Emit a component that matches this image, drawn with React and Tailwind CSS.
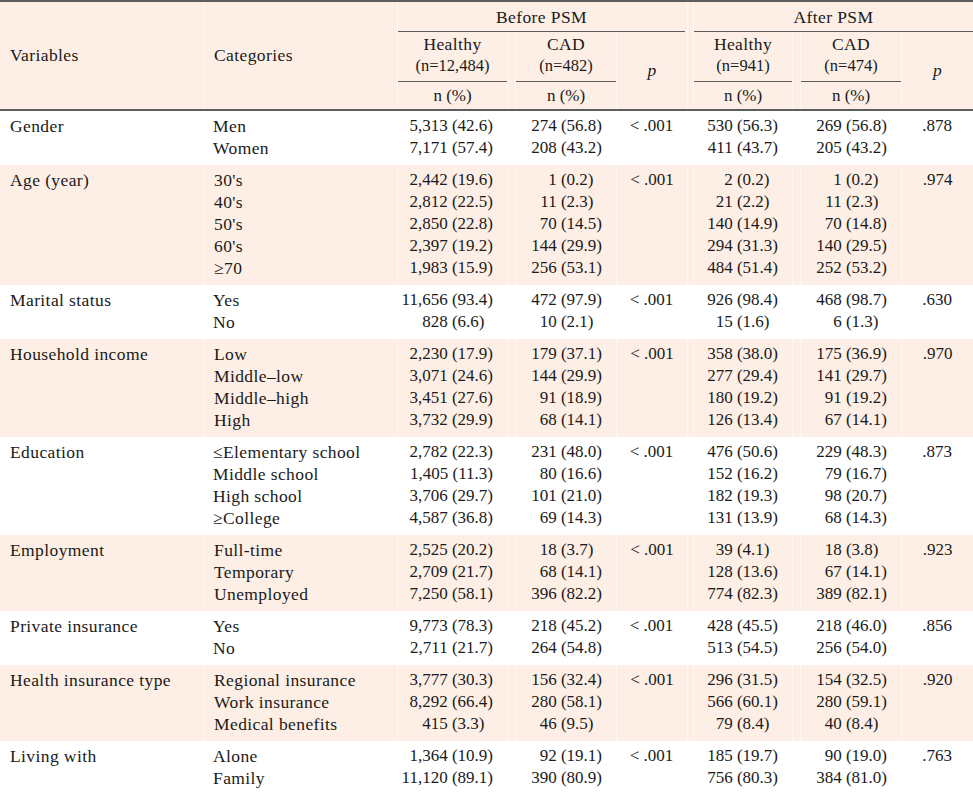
const COLS = 'grid grid-cols-[203px_194px_110px_8px_101px_71px_6px_99px_8px_101px_72px]';

const groups = [
  {
    name: 'Gender',
    cats: ['Men', 'Women'],
    hb: ['5,313 (42.6)', '7,171 (57.4)'],
    cb: ['274 (56.8)', '208 (43.2)'],
    pb: '< .001',
    ha: ['530 (56.3)', '411 (43.7)'],
    ca: ['269 (56.8)', '205 (43.2)'],
    pa: '.878',
  },
  {
    name: 'Age (year)',
    cats: ["30's", "40's", "50's", "60's", '≥70'],
    hb: ['2,442 (19.6)', '2,812 (22.5)', '2,850 (22.8)', '2,397 (19.2)', '1,983 (15.9)'],
    cb: ['1 (0.2)', '11 (2.3)', '70 (14.5)', '144 (29.9)', '256 (53.1)'],
    pb: '< .001',
    ha: ['2 (0.2)', '21 (2.2)', '140 (14.9)', '294 (31.3)', '484 (51.4)'],
    ca: ['1 (0.2)', '11 (2.3)', '70 (14.8)', '140 (29.5)', '252 (53.2)'],
    pa: '.974',
  },
  {
    name: 'Marital status',
    cats: ['Yes', 'No'],
    hb: ['11,656 (93.4)', '828 (6.6)'],
    cb: ['472 (97.9)', '10 (2.1)'],
    pb: '< .001',
    ha: ['926 (98.4)', '15 (1.6)'],
    ca: ['468 (98.7)', '6 (1.3)'],
    pa: '.630',
  },
  {
    name: 'Household income',
    cats: ['Low', 'Middle–low', 'Middle–high', 'High'],
    hb: ['2,230 (17.9)', '3,071 (24.6)', '3,451 (27.6)', '3,732 (29.9)'],
    cb: ['179 (37.1)', '144 (29.9)', '91 (18.9)', '68 (14.1)'],
    pb: '< .001',
    ha: ['358 (38.0)', '277 (29.4)', '180 (19.2)', '126 (13.4)'],
    ca: ['175 (36.9)', '141 (29.7)', '91 (19.2)', '67 (14.1)'],
    pa: '.970',
  },
  {
    name: 'Education',
    cats: ['≤Elementary school', 'Middle school', 'High school', '≥College'],
    hb: ['2,782 (22.3)', '1,405 (11.3)', '3,706 (29.7)', '4,587 (36.8)'],
    cb: ['231 (48.0)', '80 (16.6)', '101 (21.0)', '69 (14.3)'],
    pb: '< .001',
    ha: ['476 (50.6)', '152 (16.2)', '182 (19.3)', '131 (13.9)'],
    ca: ['229 (48.3)', '79 (16.7)', '98 (20.7)', '68 (14.3)'],
    pa: '.873',
  },
  {
    name: 'Employment',
    cats: ['Full-time', 'Temporary', 'Unemployed'],
    hb: ['2,525 (20.2)', '2,709 (21.7)', '7,250 (58.1)'],
    cb: ['18 (3.7)', '68 (14.1)', '396 (82.2)'],
    pb: '< .001',
    ha: ['39 (4.1)', '128 (13.6)', '774 (82.3)'],
    ca: ['18 (3.8)', '67 (14.1)', '389 (82.1)'],
    pa: '.923',
  },
  {
    name: 'Private insurance',
    cats: ['Yes', 'No'],
    hb: ['9,773 (78.3)', '2,711 (21.7)'],
    cb: ['218 (45.2)', '264 (54.8)'],
    pb: '< .001',
    ha: ['428 (45.5)', '513 (54.5)'],
    ca: ['218 (46.0)', '256 (54.0)'],
    pa: '.856',
  },
  {
    name: 'Health insurance type',
    cats: ['Regional insurance', 'Work insurance', 'Medical benefits'],
    hb: ['3,777 (30.3)', '8,292 (66.4)', '415 (3.3)'],
    cb: ['156 (32.4)', '280 (58.1)', '46 (9.5)'],
    pb: '< .001',
    ha: ['296 (31.5)', '566 (60.1)', '79 (8.4)'],
    ca: ['154 (32.5)', '280 (59.1)', '40 (8.4)'],
    pa: '.920',
  },
  {
    name: 'Living with',
    cats: ['Alone', 'Family'],
    hb: ['1,364 (10.9)', '11,120 (89.1)'],
    cb: ['92 (19.1)', '390 (80.9)'],
    pb: '< .001',
    ha: ['185 (19.7)', '756 (80.3)'],
    ca: ['90 (19.0)', '384 (81.0)'],
    pa: '.763',
  },
];

function Num({ v }) {
  const m = v.match(/\((\d+)\./);
  const pad = m && m[1].length === 1;
  return (
    <div>
      {v}
      {pad && <span className="invisible">0</span>}
    </div>
  );
}

function NumCell({ list }) {
  return (
    <div className="text-right pr-[14px] text-[17px]">
      {list.map((v, i) => (
        <Num key={i} v={v} />
      ))}
    </div>
  );
}

function Group({ g, shaded }) {
  const line = shaded ? 'border-l border-[#fff8f3]' : '';
  return (
    <div className={`${COLS} leading-[22px] ${shaded ? 'bg-[#fdefe5]' : 'bg-white'}`}>
      <div className="pl-[10px] pt-[4px] pb-[6px] text-[17.5px] tracking-[0.4px]">{g.name}</div>
      <div className={`pl-[10px] pt-[4px] pb-[6px] text-[17.5px] tracking-[0.4px] ${line}`}>
        {g.cats.map((c) => (
          <div key={c}>{c}</div>
        ))}
      </div>
      <div className={`pt-[4px] pb-[6px] ${line}`}>
        <NumCell list={g.hb} />
      </div>
      <div className={line} />
      <div className={`pt-[4px] pb-[6px] ${line}`}>
        <NumCell list={g.cb} />
      </div>
      <div className={`pt-[4px] text-center text-[17px] ${line}`}>{g.pb}</div>
      <div className={line} />
      <div className={`pt-[4px] pb-[6px] ${line}`}>
        <NumCell list={g.ha} />
      </div>
      <div className={line} />
      <div className={`pt-[4px] pb-[6px] ${line}`}>
        <NumCell list={g.ca} />
      </div>
      <div className={`pt-[4px] text-center text-[17px] ${line}`}>{g.pa}</div>
    </div>
  );
}

function Header() {
  const line = 'border-l border-[#fff8f3]';
  const rule = 'border-b border-[#5c5c5c]';
  return (
    <div className={`${COLS} grid-rows-[30px_50px_27px] bg-[#fdefe5] border-b-2 border-[#5c5c5c] text-[17.5px] tracking-[0.4px]`}>
      <div className="row-span-3 flex items-center pl-[10px]">Variables</div>
      <div className={`row-span-3 flex items-center pl-[10px] ${line}`}>Categories</div>

      <div className={`col-span-4 ${line}`}>
        <div className={`mr-[2px] h-[30px] pt-[4px] leading-[22px] text-center ${rule}`}>Before PSM</div>
      </div>
      <div className={line} />
      <div className={`col-span-4 ${line}`}>
        <div className={`h-[30px] pt-[4px] leading-[22px] text-center ${rule}`}>After PSM</div>
      </div>

      <div className={line}>
        <div className={`h-[50px] pt-[2px] text-center leading-[21px] ${rule}`}>
          <div>Healthy</div>
          <div className="text-[16.5px] tracking-normal">(n=12,484)</div>
        </div>
      </div>
      <div className={line} />
      <div className={line}>
        <div className={`h-[50px] pt-[2px] text-center leading-[21px] ${rule}`}>
          <div>CAD</div>
          <div className="text-[16.5px] tracking-normal">(n=482)</div>
        </div>
      </div>
      <div className={`row-span-2 flex items-center justify-center italic ${line}`}>p</div>
      <div className={`row-span-2 ${line}`} />
      <div className={line}>
        <div className={`h-[50px] pt-[2px] text-center leading-[21px] ${rule}`}>
          <div>Healthy</div>
          <div className="text-[16.5px] tracking-normal">(n=941)</div>
        </div>
      </div>
      <div className={line} />
      <div className={line}>
        <div className={`h-[50px] pt-[2px] text-center leading-[21px] ${rule}`}>
          <div>CAD</div>
          <div className="text-[16.5px] tracking-normal">(n=474)</div>
        </div>
      </div>
      <div className={`row-span-2 flex items-center justify-center italic ${line}`}>p</div>

      <div className={`pt-[3px] leading-[22px] text-center text-[17px] tracking-normal ${line}`}>n (%)</div>
      <div className={line} />
      <div className={`pt-[3px] leading-[22px] text-center text-[17px] tracking-normal ${line}`}>n (%)</div>
      <div className={`pt-[3px] leading-[22px] text-center text-[17px] tracking-normal ${line}`}>n (%)</div>
      <div className={line} />
      <div className={`pt-[3px] leading-[22px] text-center text-[17px] tracking-normal ${line}`}>n (%)</div>
    </div>
  );
}

export default function App() {
  return (
    <div className="w-[973px] bg-white font-['Liberation_Serif',serif] text-[#1a1a1a]">
      <div className="border-t-2 border-b-2 border-[#5c5c5c]">
        <Header />
        {groups.map((g, i) => (
          <Group key={g.name} g={g} shaded={i % 2 === 1} />
        ))}
      </div>
    </div>
  );
}
